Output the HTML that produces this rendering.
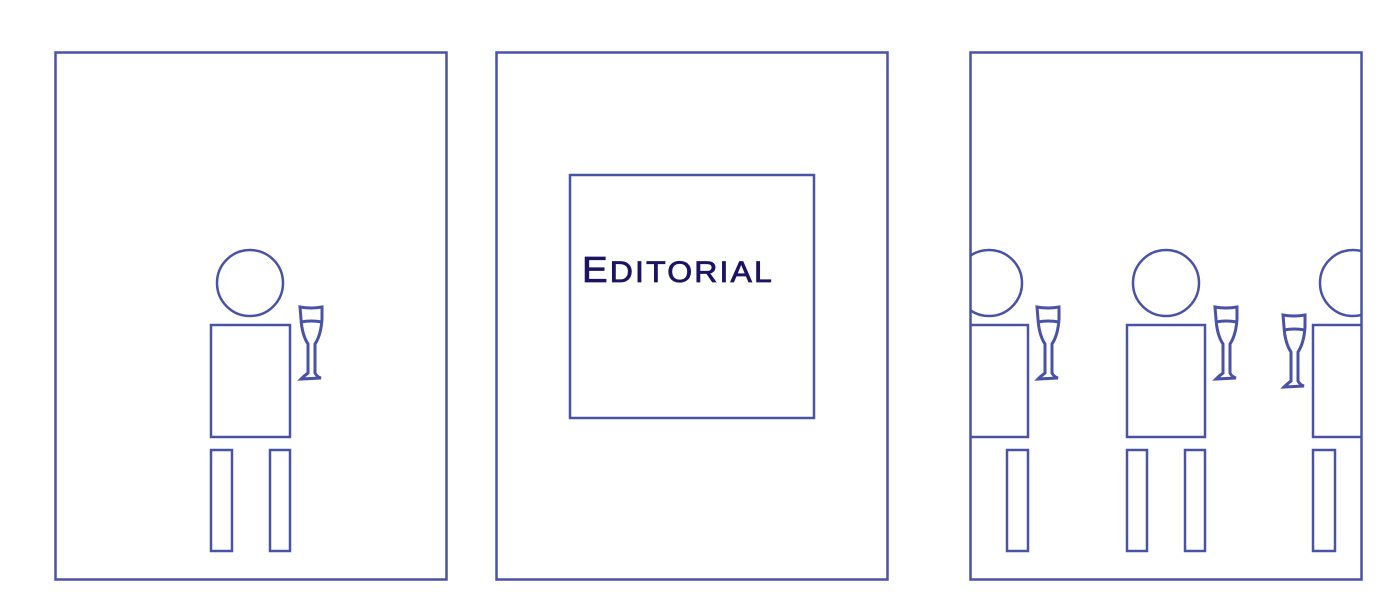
<!DOCTYPE html>
<html><head><meta charset="utf-8"><style>
html,body{margin:0;padding:0;background:#fff;width:1388px;height:612px;overflow:hidden}
svg{display:block}
</style></head><body>
<svg width="1388" height="612" viewBox="0 0 1388 612" xmlns="http://www.w3.org/2000/svg">
<defs>
<clipPath id="c3"><rect x="970" y="52" width="391" height="527"/></clipPath>
<g id="glass">
<path d="M0,0 Q11,2 22,0 L22,12 Q21,28 15,37 L15,66 Q17,70 21,71 L1,72 Q4,69 8,66 L8,37 Q2,28 1,12 Z M1,15 Q11,13 22,15" fill="none" stroke="#4a52a6" stroke-width="3"/>
</g>
</defs>
<g fill="none" stroke="#4a52a6" stroke-width="2.5">
<rect x="55.5" y="52.5" width="391" height="527"/>
<circle cx="250" cy="283" r="33"/>
<rect x="211" y="325" width="79" height="112"/>
<rect x="211" y="450" width="21" height="101"/>
<rect x="270" y="450" width="20" height="101"/>

<rect x="496.5" y="52.5" width="391" height="527"/>
<rect x="570" y="175" width="244" height="243"/>

<rect x="970.5" y="52.5" width="391" height="527"/>
<g clip-path="url(#c3)">
<circle cx="989" cy="283" r="33"/>
<rect x="960" y="325" width="68" height="112"/>
<rect x="1007" y="450" width="21" height="101"/>
<circle cx="1166" cy="283" r="33"/>
<rect x="1127" y="325" width="78" height="112"/>
<rect x="1127" y="450" width="20" height="101"/>
<rect x="1185" y="450" width="20" height="101"/>
<circle cx="1353" cy="283" r="33"/>
<rect x="1313" y="325" width="60" height="112"/>
<rect x="1313" y="450" width="22" height="101"/>
</g>
</g>
<use href="#glass" x="300" y="307"/>
<use href="#glass" x="1037" y="307"/>
<use href="#glass" x="1215" y="307"/>
<use href="#glass" x="1283" y="315"/>
<text x="582" y="282" font-family="Liberation Sans, sans-serif" font-size="36" fill="#1c1463" stroke="#1c1463" stroke-width="0.8" letter-spacing="2" textLength="192" lengthAdjust="spacingAndGlyphs">E<tspan font-size="30">DITORIAL</tspan></text>
</svg>
</body></html>
